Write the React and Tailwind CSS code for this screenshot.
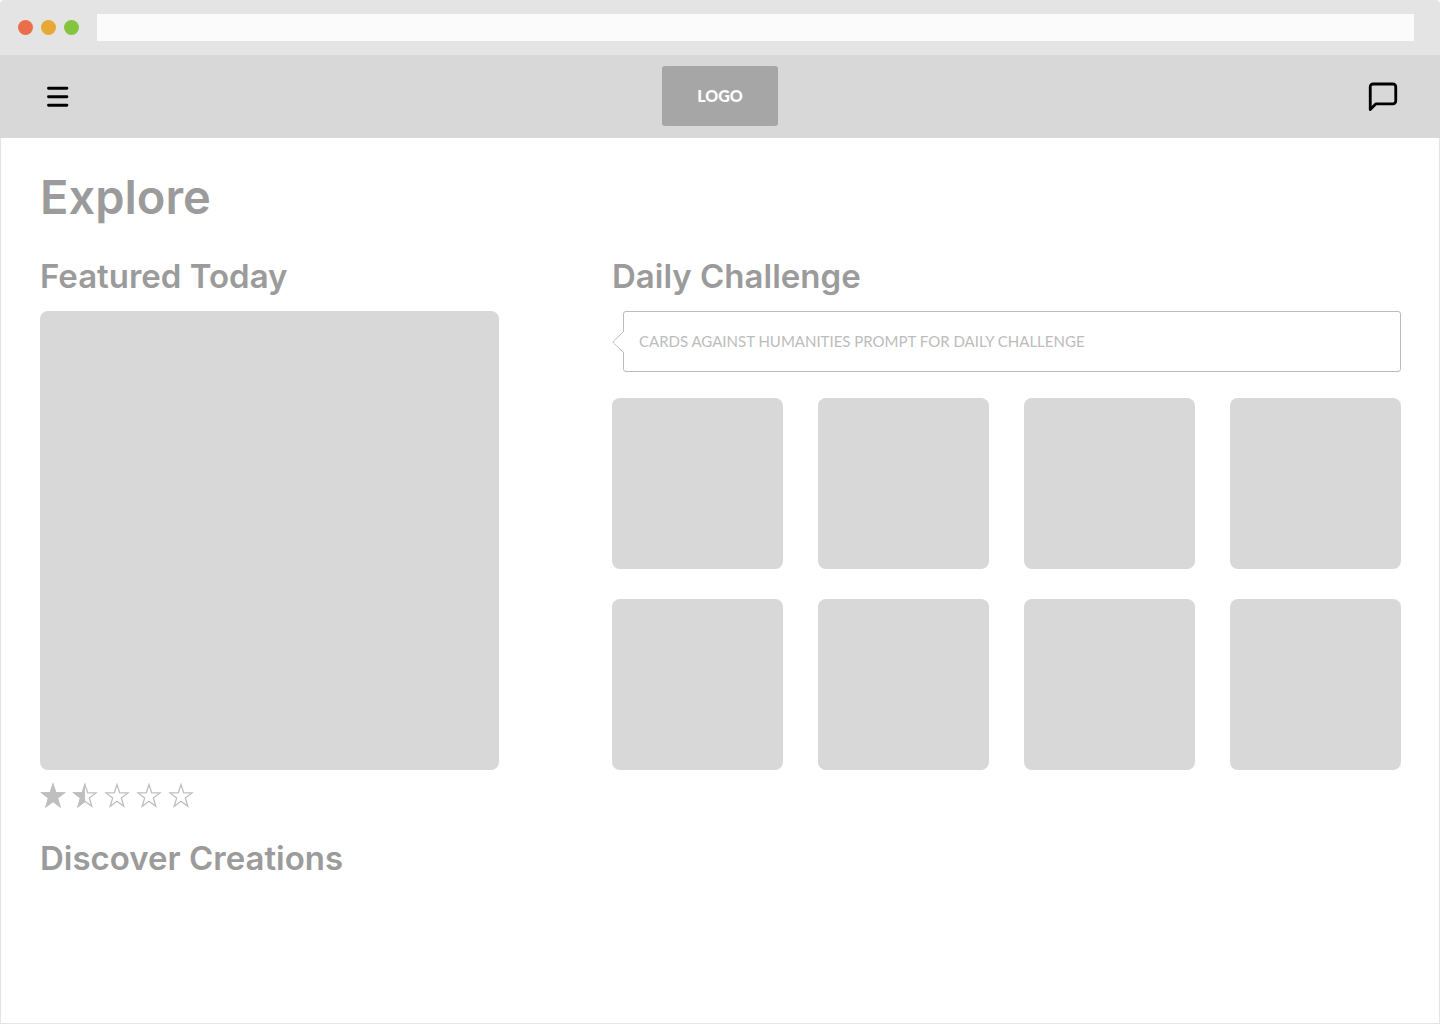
import { useId } from "react";

const creations = [1, 2, 3, 4, 5, 6, 7, 8];

function BrowserBar() {
  return (
    <div className="flex items-center bg-[#e4e4e4] py-3.5 pl-[18px] pr-[26px] rounded-t">
      <div className="flex gap-2">
        <span className="size-[15px] rounded-full bg-[#eb6e4b]" />
        <span className="size-[15px] rounded-full bg-[#e6a935]" />
        <span className="size-[15px] rounded-full bg-[#85c43d]" />
      </div>
      <input
        type="text"
        aria-label="Address"
        className="ml-[18px] h-[27px] min-w-0 flex-1 bg-[#fbfbfb] px-3 text-sm text-[#979797] outline-none"
      />
    </div>
  );
}

function Header() {
  return (
    <header className="grid grid-cols-3 items-center bg-[#d8d8d8] px-10 pt-[11px] pb-3">
      <button type="button" aria-label="Menu" className="justify-self-start">
        <svg width="36" height="36" viewBox="0 0 36 36" fill="none" stroke="#000" strokeWidth="2.9" strokeLinecap="round">
          <path d="M8.5 10.3h18.4M8.5 18.8h18.4M8.5 27.3h18.4" />
        </svg>
      </button>
      <a
        href="#"
        className="flex h-[60px] w-[116px] items-center justify-center justify-self-center rounded-[3px] bg-[#a6a6a6] font-['Lato',sans-serif] text-base font-black text-white"
      >
        LOGO
      </a>
      <button type="button" aria-label="Messages" className="justify-self-end">
        <svg width="34" height="34" viewBox="0 0 24 24" fill="none" stroke="#000" strokeWidth="2" strokeLinecap="round" strokeLinejoin="round">
          <path d="M21 15.5a2 2 0 0 1-2 2H7l-4 4V5.5a2 2 0 0 1 2-2h14a2 2 0 0 1 2 2z" />
        </svg>
      </button>
    </header>
  );
}

function Heading({ children }) {
  return <h2 className="text-[33px] leading-10 font-semibold">{children}</h2>;
}

// fill: 0 = empty, 0.5 = half, 1 = full
function Star({ fill }) {
  const id = useId();
  const points = "13,2.6 15.7,10.8 23.9,10.9 17.3,16 19.8,24.3 13,19.3 6.2,24.3 8.7,16 2.1,10.9 10.3,10.8";
  return (
    <svg width="26" height="26" viewBox="0 0 26 26" stroke="#bfbfbf" strokeWidth="1.3">
      <clipPath id={id}>
        <rect width={26 * fill} height="26" />
      </clipPath>
      <polygon points={points} fill="none" />
      <polygon points={points} fill="#bfbfbf" clipPath={`url(#${id})`} />
    </svg>
  );
}

function Rating({ value }) {
  return (
    <div role="img" aria-label={`Rated ${value} out of 5`} className="mt-3 flex gap-1.5">
      {[0, 1, 2, 3, 4].map((i) => (
        <Star key={i} fill={Math.max(0, Math.min(1, value - i))} />
      ))}
    </div>
  );
}

function Prompt({ children }) {
  return (
    <div className="relative mt-[15px] ml-[11px] rounded-[3px] border border-[#bcbcbc] py-[19px] px-[15px]">
      {/* pointer on the left edge */}
      <svg className="absolute top-[19px] -left-3" width="12" height="22" viewBox="0 0 12 22">
        <path d="M12 0.5h-0.5L1.5 10q-0.9 1 0 2L11.5 21.5H12z" fill="#fff" />
        <path d="M11.5 0v0.7L1.5 10q-0.9 1 0 2L11.5 21.3V22" fill="none" stroke="#bcbcbc" />
      </svg>
      <p className="font-['Lato',sans-serif] text-[15px] leading-[21px] text-[#bcbcbc]">{children}</p>
    </div>
  );
}

export default function App() {
  return (
    <div className="flex min-h-screen flex-col bg-white font-['Inter',sans-serif] text-[#9b9b9b]">
      <BrowserBar />
      <Header />
      <main className="flex-1 border-x border-b border-[#e4e4e4] pt-[31px] pb-10 pl-[39px] pr-[38px]">
        <h1 className="text-[47px] leading-14 font-semibold">Explore</h1>

        <div className="mt-[31px] grid grid-cols-[459fr_789fr] gap-[113px]">
          <section>
            <Heading>Featured Today</Heading>
            <div className="mt-[15px] aspect-square rounded-lg bg-[#d8d8d8]" />
            <Rating value={1.5} />
          </section>

          <section>
            <Heading>Daily Challenge</Heading>
            <Prompt>CARDS AGAINST HUMANITIES PROMPT FOR DAILY CHALLENGE</Prompt>
            <div className="mt-[26px] grid grid-cols-4 gap-x-[35px] gap-y-[30px]">
              {creations.map((id) => (
                <div key={id} className="aspect-square rounded-lg bg-[#d8d8d8]" />
              ))}
            </div>
          </section>
        </div>

        <section className="mt-[30px]">
          <Heading>Discover Creations</Heading>
        </section>
      </main>
    </div>
  );
}
